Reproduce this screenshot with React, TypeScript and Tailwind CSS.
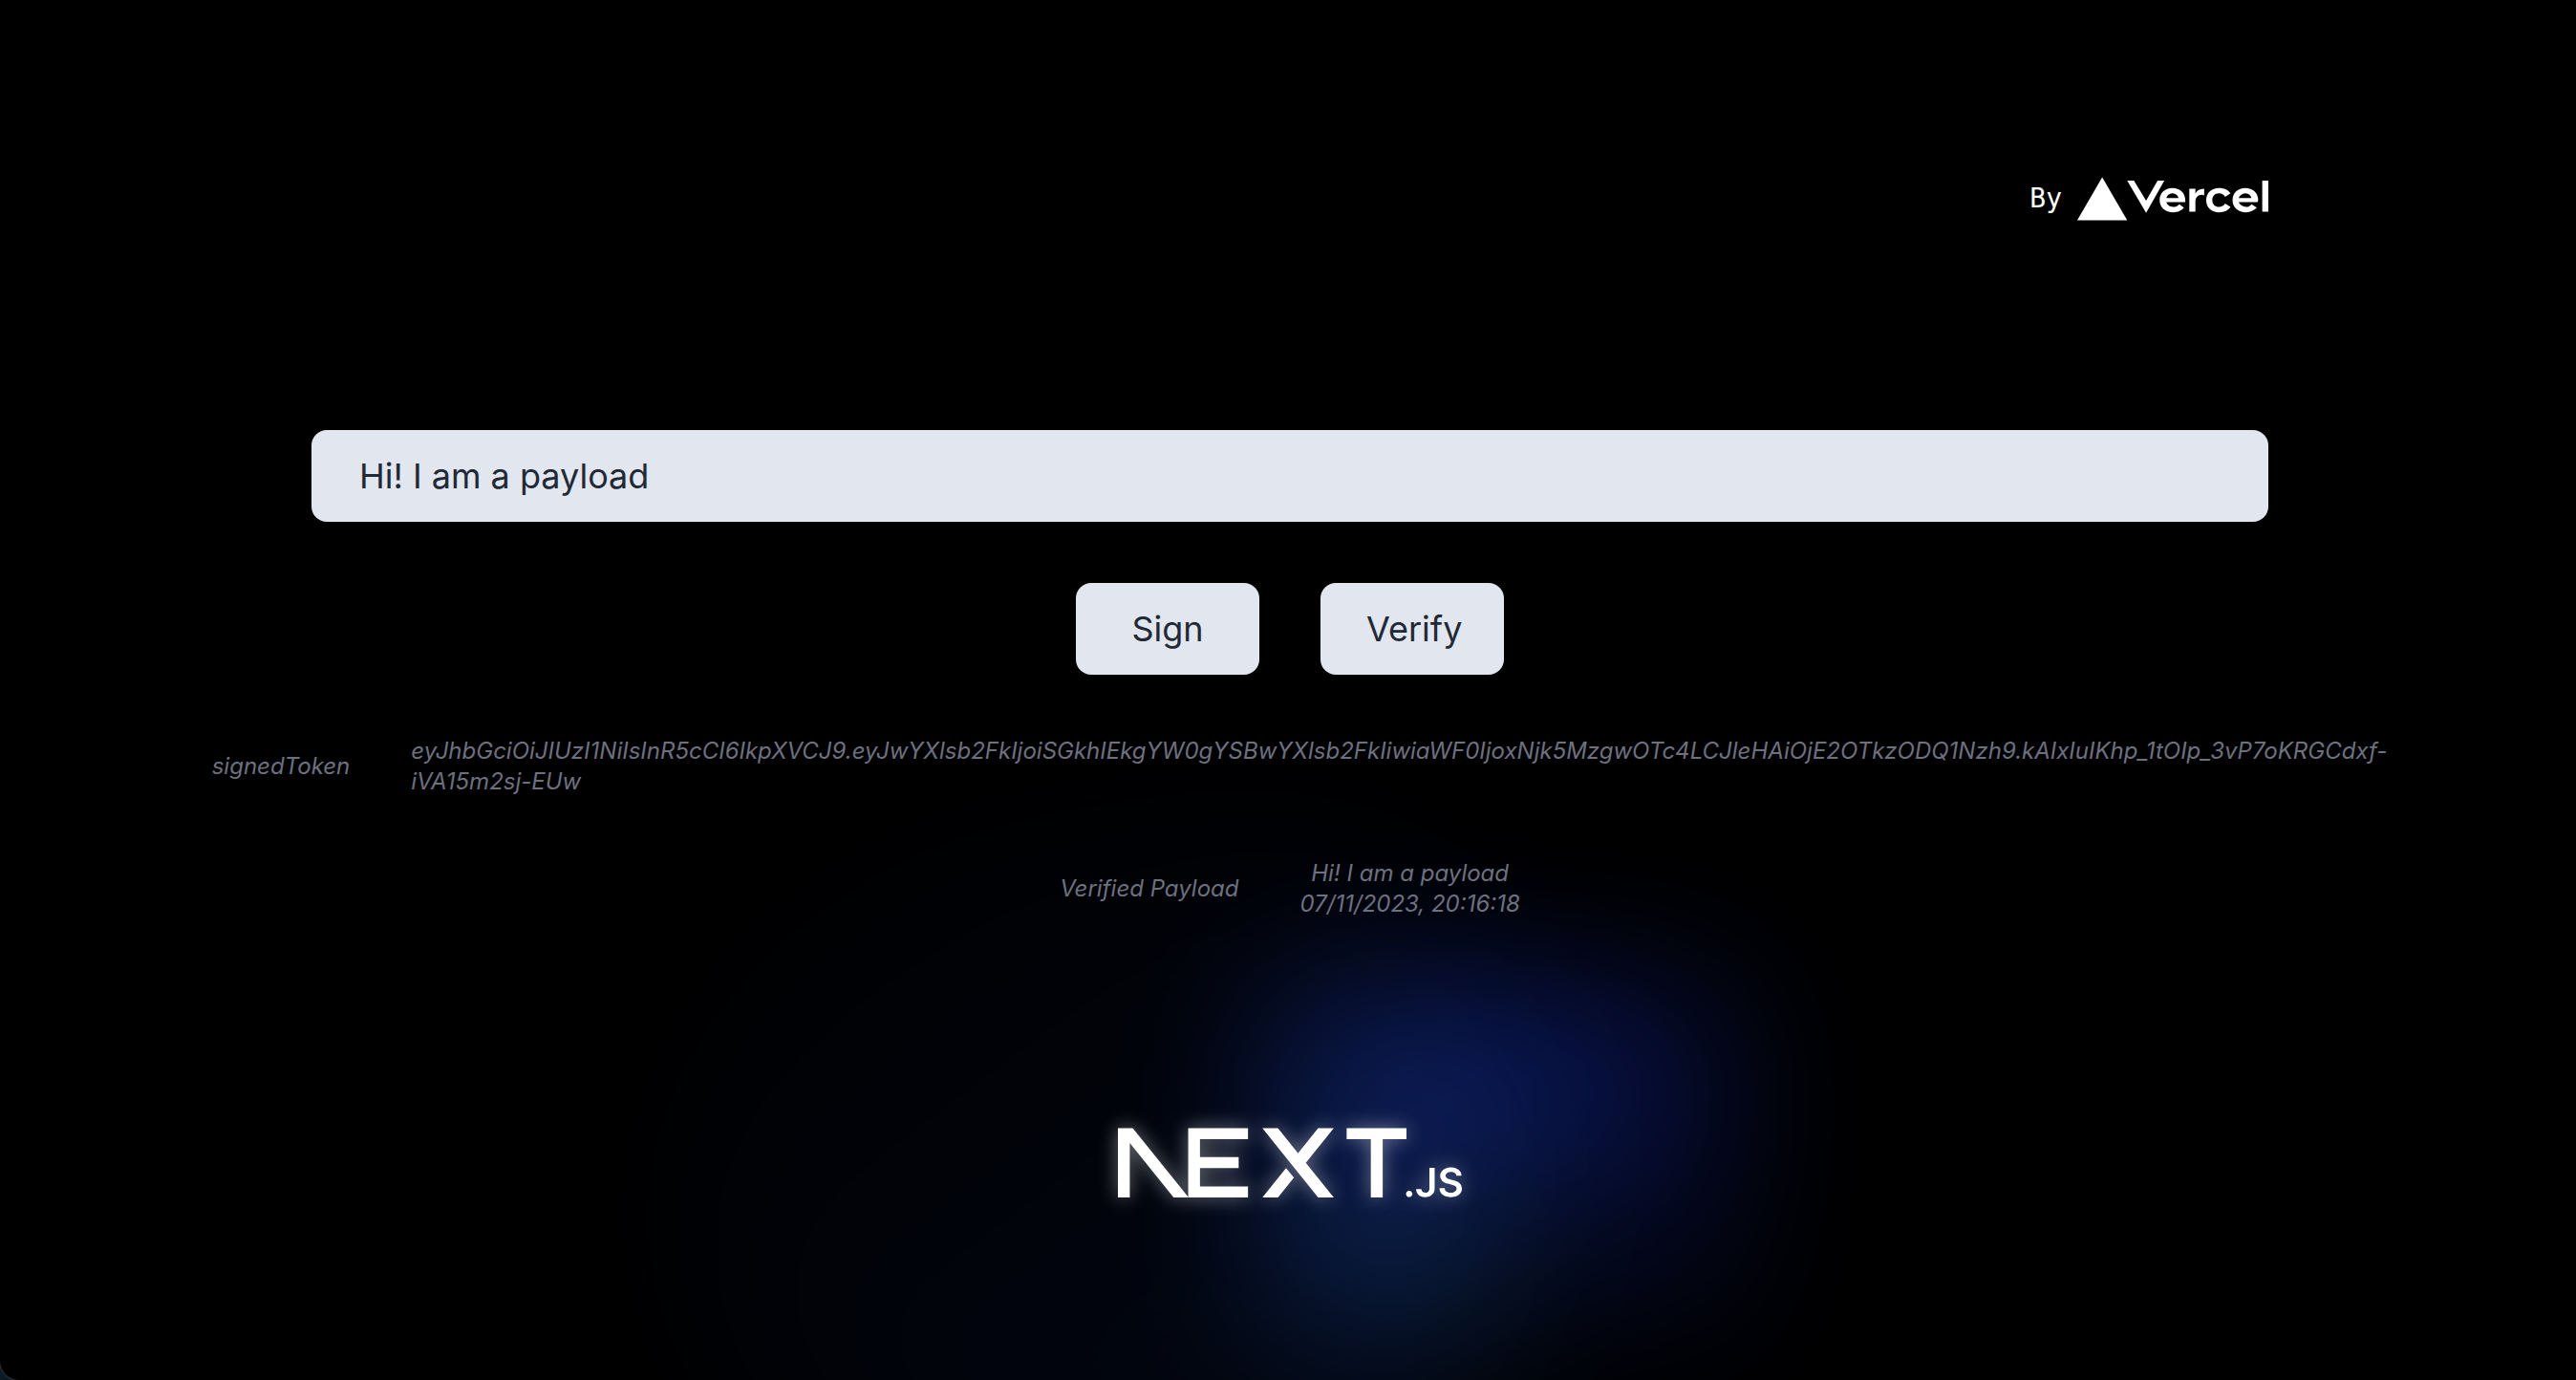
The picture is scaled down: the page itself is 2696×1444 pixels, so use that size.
import { useState } from "react";

const TOKEN =
  "eyJhbGciOiJIUzI1NiIsInR5cCI6IkpXVCJ9.eyJwYXlsb2FkIjoiSGkhIEkgYW0gYSBwYXlsb2FkIiwiaWF0IjoxNjk5MzgwOTc4LCJleHAiOjE2OTkzODQ1Nzh9.kAIxIuIKhp_1tOIp_3vP7oKRGCdxf-iVA15m2sj-EUw";

function VercelLogo() {
  return (
    <svg role="img" aria-label="Vercel" viewBox="0 0 283 64" className="h-12 w-[200px] fill-white">
      <path d="M141 16c-11 0-19 7-19 18s9 18 20 18c7 0 13-3 16-7l-7-5c-2 3-6 4-9 4-5 0-9-3-10-7h28v-3c0-11-8-18-19-18zm-9 15c1-4 4-7 9-7s8 3 9 7h-18zm117-15c-11 0-19 7-19 18s9 18 20 18c6 0 12-3 16-7l-8-5c-2 3-5 4-8 4-5 0-9-3-11-7h28l1-3c0-11-8-18-19-18zm-10 15c2-4 5-7 10-7s8 3 9 7h-19zm-39 3c0 6 4 10 10 10 4 0 7-2 9-5l8 5c-3 5-9 8-17 8-11 0-19-7-19-18s8-18 19-18c8 0 14 3 17 8l-8 5c-2-3-5-5-9-5-6 0-10 4-10 10zm83-29v46h-9V5h9zM37 0l37 64H0L37 0zm92 5-27 48L74 5h10l18 30 17-30h10zm59 12v10l-3-1c-6 0-10 4-10 10v15h-9V17h9v9c0-5 6-9 13-9z" />
    </svg>
  );
}

function NextLogo() {
  return (
    <svg
      role="img"
      aria-label="Next.js"
      viewBox="0 0 394 80"
      className="relative h-[74px] w-[360px] fill-white drop-shadow-[0_0_10px_#ffffff70]"
    >
      <path d="M262 0h68.5v12.7h-27.2v66.6h-13.6V12.7H262V0ZM149 0v12.7H94v20.4h44.3v12.6H94v21h55v12.6H80.5V0h68.7zm34.3 0h-17.8l63.8 79.4h17.9l-32-39.7 32-39.6h-17.9l-23 28.6-23-28.6zm18.3 56.7-9-11-27.1 33.7h17.8l18.3-22.7z" />
      <path d="M81 79.3 17 0H0v79.3h13.6V17l50.2 62.3H81Zm252.6-.4c-1 0-1.8-.4-2.5-1s-1.1-1.6-1.1-2.6.3-1.8 1-2.5 1.6-1 2.6-1 1.8.3 2.5 1a3.4 3.4 0 0 1 .6 4.3 3.7 3.7 0 0 1-3 1.8zm23.2-33.5h6v23.3c0 2.1-.4 4-1.3 5.5a9.1 9.1 0 0 1-3.8 3.5c-1.6.8-3.5 1.3-5.7 1.3-2 0-3.7-.4-5.3-1s-2.8-1.8-3.7-3.2c-.9-1.3-1.4-3-1.4-5h6c.1.8.3 1.6.7 2.2s1 1.2 1.6 1.5c.7.4 1.5.5 2.4.5 1 0 1.8-.2 2.4-.6a4 4 0 0 0 1.6-1.8c.3-.8.5-1.8.5-3V45.5zm30.9 9.1a4.4 4.4 0 0 0-2-3.3 7.5 7.5 0 0 0-4.3-1.1c-1.3 0-2.4.2-3.3.5-.9.4-1.6 1-2 1.6a3.5 3.5 0 0 0-.3 4c.3.5.7.9 1.3 1.2l1.8 1 2 .5 3.2.8c1.3.3 2.5.7 3.7 1.2a13 13 0 0 1 3.2 1.8 8.1 8.1 0 0 1 3 6.5c0 2-.5 3.7-1.5 5.1a10 10 0 0 1-4.4 3.5c-1.8.8-4.1 1.2-6.8 1.2-2.6 0-4.9-.4-6.8-1.2-2-.8-3.4-2-4.5-3.5a10 10 0 0 1-1.7-5.6h6a5 5 0 0 0 3.5 4.6c1 .4 2.2.6 3.4.6 1.3 0 2.5-.2 3.5-.6 1-.4 1.8-1 2.4-1.7a4 4 0 0 0 .8-2.4c0-.9-.2-1.6-.7-2.2a11 11 0 0 0-2.1-1.4l-3.2-1-3.8-1c-2.8-.7-5-1.7-6.6-3.2a7.2 7.2 0 0 1-2.4-5.7 8 8 0 0 1 1.7-5 10 10 0 0 1 4.3-3.5c2-.8 4-1.2 6.4-1.2 2.3 0 4.4.4 6.2 1.2 1.8.8 3.2 2 4.3 3.4 1 1.4 1.5 3 1.5 5h-5.8z" />
    </svg>
  );
}

export default function App() {
  const [payload, setPayload] = useState("Hi! I am a payload");
  return (
    <div className="overflow-hidden bg-[#0c1a26]">
      <main className="relative isolate flex min-h-screen flex-col items-center justify-between overflow-hidden rounded-bl-[20px] bg-black pt-[184px] pr-48 pb-[190px] pl-[196px] font-['Inter',sans-serif] text-white shadow-[0_0_0_1px_#333538]">
        <header className="flex w-full max-w-[2048px] justify-end">
          <a
            href="#vercel"
            className="flex items-center gap-4 font-['DejaVu_Sans_Mono',monospace] text-[28px] leading-10"
          >
            By
            <VercelLogo />
          </a>
        </header>

        <div className="relative z-10 flex w-full flex-col items-center gap-16">
          <input
            type="text"
            aria-label="Payload"
            value={payload}
            onChange={(e) => setPayload(e.target.value)}
            className="h-24 w-full max-w-[2048px] rounded-2xl bg-[#e2e6ee] px-[50px] text-4xl text-[#212936]"
          />
          <div className="flex gap-16">
            <button type="button" className="h-24 w-48 rounded-2xl bg-[#e2e6ee] px-12 text-4xl text-[#212936]">
              Sign
            </button>
            <button type="button" className="h-24 w-48 rounded-2xl bg-[#e2e6ee] px-12 text-4xl text-[#212936]">
              Verify
            </button>
          </div>
          <div className="flex items-center gap-16 text-2xl text-[#6d717f] italic">
            <p>signedToken</p>
            <p className="max-w-[2048px]">{TOKEN}</p>
          </div>
          <div className="flex items-center gap-16 text-2xl text-[#6d717f] italic">
            <p>Verified Payload</p>
            <p className="text-center">
              Hi! I am a payload
              <br />
              07/11/2023, 20:16:18
            </p>
          </div>
        </div>

        <div className="relative flex place-items-center before:absolute before:-z-10 before:h-[720px] before:w-[960px] before:-translate-x-1/2 before:rounded-full before:bg-[linear-gradient(to_bottom_right,#1d4ed800,#1d4ed8)] before:opacity-10 before:blur-[88px] before:content-[''] after:absolute after:-z-20 after:h-[360px] after:w-[480px] after:translate-x-1/3 after:bg-[conic-gradient(from_180deg_at_50%_50%,#1b4769,#1c3cec,#1c3cec00)] after:opacity-40 after:blur-[80px] after:content-['']">
          <NextLogo />
        </div>
      </main>
    </div>
  );
}
